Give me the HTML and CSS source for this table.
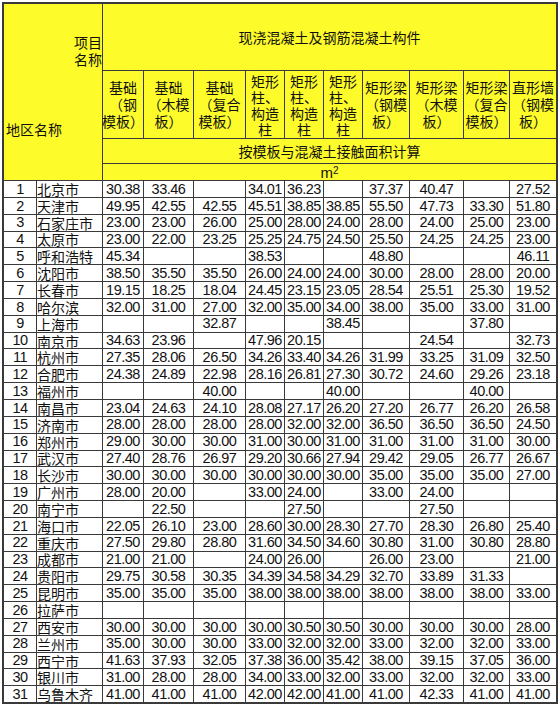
FILE: index.html
```html
<!DOCTYPE html>
<html lang="zh-CN">
<head>
<meta charset="utf-8">
<title>模板与混凝土接触面积</title>
<link rel="stylesheet" href="styles.css">
</head>
<body>
<div class="sheet">
  <div class="corner"><span class="item">项目<br>名称</span><span class="region">地区名称</span></div>
  <div class="title">现浇混凝土及钢筋混凝土构件</div>
  <div class="sub"><span>基础</span><span>（钢</span><span>模板）</span></div>
  <div class="sub"><span>基础</span><span>（木模</span><span>板）</span></div>
  <div class="sub"><span>基础</span><span>（复合</span><span>模板）</span></div>
  <div class="sub tall"><span>矩形</span><span>柱、</span><span>构造</span><span>柱</span></div>
  <div class="sub tall"><span>矩形</span><span>柱、</span><span>构造</span><span>柱</span></div>
  <div class="sub tall"><span>矩形</span><span>柱、</span><span>构造</span><span>柱</span></div>
  <div class="sub"><span>矩形梁</span><span>（钢模</span><span>板）</span></div>
  <div class="sub"><span>矩形梁</span><span>（木模</span><span>板）</span></div>
  <div class="sub"><span>矩形梁</span><span>（复合</span><span>模板）</span></div>
  <div class="sub"><span>直形墙</span><span>（钢模</span><span>板）</span></div>
  <div class="band">按模板与混凝土接触面积计算</div>
  <div class="band unit">m<sup>2</sup></div>

  <div class="n">1</div><div class="city">北京市</div><div class="v">30.38</div><div class="v">33.46</div><div class="v"></div><div class="v">34.01</div><div class="v">36.23</div><div class="v"></div><div class="v">37.37</div><div class="v">40.47</div><div class="v"></div><div class="v">27.52</div>
  <div class="n">2</div><div class="city">天津市</div><div class="v">49.95</div><div class="v">42.55</div><div class="v">42.55</div><div class="v">45.51</div><div class="v">38.85</div><div class="v">38.85</div><div class="v">55.50</div><div class="v">47.73</div><div class="v">33.30</div><div class="v">51.80</div>
  <div class="n">3</div><div class="city">石家庄市</div><div class="v">23.00</div><div class="v">23.00</div><div class="v">26.00</div><div class="v">25.00</div><div class="v">28.00</div><div class="v">24.00</div><div class="v">28.00</div><div class="v">24.00</div><div class="v">25.00</div><div class="v">23.00</div>
  <div class="n">4</div><div class="city">太原市</div><div class="v">23.00</div><div class="v">22.00</div><div class="v">23.25</div><div class="v">25.25</div><div class="v">24.75</div><div class="v">24.50</div><div class="v">25.50</div><div class="v">24.25</div><div class="v">24.25</div><div class="v">23.00</div>
  <div class="n">5</div><div class="city">呼和浩特</div><div class="v">45.34</div><div class="v"></div><div class="v"></div><div class="v">38.53</div><div class="v"></div><div class="v"></div><div class="v">48.80</div><div class="v"></div><div class="v"></div><div class="v">46.11</div>
  <div class="n">6</div><div class="city">沈阳市</div><div class="v">38.50</div><div class="v">35.50</div><div class="v">35.50</div><div class="v">26.00</div><div class="v">24.00</div><div class="v">24.00</div><div class="v">30.00</div><div class="v">28.00</div><div class="v">28.00</div><div class="v">20.00</div>
  <div class="n">7</div><div class="city">长春市</div><div class="v">19.15</div><div class="v">18.25</div><div class="v">18.04</div><div class="v">24.45</div><div class="v">23.15</div><div class="v">23.05</div><div class="v">28.54</div><div class="v">25.51</div><div class="v">25.30</div><div class="v">19.52</div>
  <div class="n">8</div><div class="city">哈尔滨</div><div class="v">32.00</div><div class="v">31.00</div><div class="v">27.00</div><div class="v">32.00</div><div class="v">35.00</div><div class="v">34.00</div><div class="v">38.00</div><div class="v">35.00</div><div class="v">33.00</div><div class="v">31.00</div>
  <div class="n">9</div><div class="city">上海市</div><div class="v"></div><div class="v"></div><div class="v">32.87</div><div class="v"></div><div class="v"></div><div class="v">38.45</div><div class="v"></div><div class="v"></div><div class="v">37.80</div><div class="v"></div>
  <div class="n">10</div><div class="city">南京市</div><div class="v">34.63</div><div class="v">23.96</div><div class="v"></div><div class="v">47.96</div><div class="v">20.15</div><div class="v"></div><div class="v"></div><div class="v">24.54</div><div class="v"></div><div class="v">32.73</div>
  <div class="n">11</div><div class="city">杭州市</div><div class="v">27.35</div><div class="v">28.06</div><div class="v">26.50</div><div class="v">34.26</div><div class="v">33.40</div><div class="v">34.26</div><div class="v">31.99</div><div class="v">33.25</div><div class="v">31.09</div><div class="v">32.50</div>
  <div class="n">12</div><div class="city">合肥市</div><div class="v">24.38</div><div class="v">24.89</div><div class="v">22.98</div><div class="v">28.16</div><div class="v">26.81</div><div class="v">27.30</div><div class="v">30.72</div><div class="v">24.60</div><div class="v">29.26</div><div class="v">23.18</div>
  <div class="n">13</div><div class="city">福州市</div><div class="v"></div><div class="v"></div><div class="v">40.00</div><div class="v"></div><div class="v"></div><div class="v">40.00</div><div class="v"></div><div class="v"></div><div class="v">40.00</div><div class="v"></div>
  <div class="n">14</div><div class="city">南昌市</div><div class="v">23.04</div><div class="v">24.63</div><div class="v">24.10</div><div class="v">28.08</div><div class="v">27.17</div><div class="v">26.20</div><div class="v">27.20</div><div class="v">26.77</div><div class="v">26.20</div><div class="v">26.58</div>
  <div class="n">15</div><div class="city">济南市</div><div class="v">28.00</div><div class="v">28.00</div><div class="v">28.00</div><div class="v">28.00</div><div class="v">32.00</div><div class="v">32.00</div><div class="v">36.50</div><div class="v">36.50</div><div class="v">36.50</div><div class="v">24.50</div>
  <div class="n">16</div><div class="city">郑州市</div><div class="v">29.00</div><div class="v">30.00</div><div class="v">30.00</div><div class="v">31.00</div><div class="v">30.00</div><div class="v">31.00</div><div class="v">31.00</div><div class="v">31.00</div><div class="v">31.00</div><div class="v">30.00</div>
  <div class="n">17</div><div class="city">武汉市</div><div class="v">27.40</div><div class="v">28.76</div><div class="v">26.97</div><div class="v">29.20</div><div class="v">30.66</div><div class="v">27.94</div><div class="v">29.42</div><div class="v">29.05</div><div class="v">26.77</div><div class="v">26.67</div>
  <div class="n">18</div><div class="city">长沙市</div><div class="v">30.00</div><div class="v">30.00</div><div class="v">30.00</div><div class="v">30.00</div><div class="v">30.00</div><div class="v">30.00</div><div class="v">35.00</div><div class="v">35.00</div><div class="v">35.00</div><div class="v">27.00</div>
  <div class="n">19</div><div class="city">广州市</div><div class="v">28.00</div><div class="v">20.00</div><div class="v"></div><div class="v">33.00</div><div class="v">24.00</div><div class="v"></div><div class="v">33.00</div><div class="v">24.00</div><div class="v"></div><div class="v"></div>
  <div class="n">20</div><div class="city">南宁市</div><div class="v"></div><div class="v">22.50</div><div class="v"></div><div class="v"></div><div class="v">27.50</div><div class="v"></div><div class="v"></div><div class="v">27.50</div><div class="v"></div><div class="v"></div>
  <div class="n">21</div><div class="city">海口市</div><div class="v">22.05</div><div class="v">26.10</div><div class="v">23.00</div><div class="v">28.60</div><div class="v">30.00</div><div class="v">28.30</div><div class="v">27.70</div><div class="v">28.30</div><div class="v">26.80</div><div class="v">25.40</div>
  <div class="n">22</div><div class="city">重庆市</div><div class="v">27.50</div><div class="v">29.80</div><div class="v">28.80</div><div class="v">31.60</div><div class="v">34.50</div><div class="v">34.60</div><div class="v">30.80</div><div class="v">31.00</div><div class="v">30.80</div><div class="v">28.80</div>
  <div class="n">23</div><div class="city">成都市</div><div class="v">21.00</div><div class="v">21.00</div><div class="v"></div><div class="v">24.00</div><div class="v">26.00</div><div class="v"></div><div class="v">26.00</div><div class="v">23.00</div><div class="v"></div><div class="v">21.00</div>
  <div class="n">24</div><div class="city">贵阳市</div><div class="v">29.75</div><div class="v">30.58</div><div class="v">30.35</div><div class="v">34.39</div><div class="v">34.58</div><div class="v">34.29</div><div class="v">32.70</div><div class="v">33.89</div><div class="v">31.33</div><div class="v"></div>
  <div class="n">25</div><div class="city">昆明市</div><div class="v">35.00</div><div class="v">35.00</div><div class="v">35.00</div><div class="v">38.00</div><div class="v">38.00</div><div class="v">38.00</div><div class="v">38.00</div><div class="v">38.00</div><div class="v">38.00</div><div class="v">33.00</div>
  <div class="n">26</div><div class="city">拉萨市</div><div class="v"></div><div class="v"></div><div class="v"></div><div class="v"></div><div class="v"></div><div class="v"></div><div class="v"></div><div class="v"></div><div class="v"></div><div class="v"></div>
  <div class="n">27</div><div class="city">西安市</div><div class="v">30.00</div><div class="v">30.00</div><div class="v">30.00</div><div class="v">30.00</div><div class="v">30.50</div><div class="v">30.50</div><div class="v">30.00</div><div class="v">30.00</div><div class="v">30.00</div><div class="v">28.00</div>
  <div class="n">28</div><div class="city">兰州市</div><div class="v">35.00</div><div class="v">30.00</div><div class="v">30.00</div><div class="v">33.00</div><div class="v">32.00</div><div class="v">32.00</div><div class="v">33.00</div><div class="v">32.00</div><div class="v">32.00</div><div class="v">33.00</div>
  <div class="n">29</div><div class="city">西宁市</div><div class="v">41.63</div><div class="v">37.93</div><div class="v">32.05</div><div class="v">37.38</div><div class="v">36.00</div><div class="v">35.42</div><div class="v">38.00</div><div class="v">39.15</div><div class="v">37.05</div><div class="v">36.00</div>
  <div class="n">30</div><div class="city">银川市</div><div class="v">31.00</div><div class="v">28.00</div><div class="v">28.00</div><div class="v">34.00</div><div class="v">33.00</div><div class="v">32.00</div><div class="v">33.00</div><div class="v">32.00</div><div class="v">32.00</div><div class="v">33.00</div>
  <div class="n">31</div><div class="city">乌鲁木齐</div><div class="v">41.00</div><div class="v">41.00</div><div class="v">41.00</div><div class="v">42.00</div><div class="v">42.00</div><div class="v">41.00</div><div class="v">41.00</div><div class="v">42.33</div><div class="v">41.00</div><div class="v">41.00</div>
</div>
</body>
</html>
```

FILE: styles.css
```css
html, body {
  margin: 0;
  background: #ffffff;
}

.sheet {
  display: grid;
  width: max-content;
  margin: 2px 0 0 2px;
  padding: 2px;
  gap: 1px;
  background: #3a3a3a;
  grid-template-columns: 32px 65px 40px 49px 51px 38px 38px 38px 46px 53px 45px 46px;
  grid-template-rows: 66px 67px 24px 16px;
  grid-auto-rows: 15.85px;
  font-family: "Noto Sans CJK SC", sans-serif;
  font-size: 14px;
  color: #111111;
}

/* header */
.corner,
.title,
.sub,
.band {
  background: #fdfb2a;
}

.corner {
  grid-column: 1 / 3;
  grid-row: 1 / 5;
  display: flex;
  flex-direction: column;
}

.corner .item {
  align-self: flex-end;
  text-align: right;
  line-height: 17px;
  margin-top: 30px;
}

.corner .region {
  margin-top: auto;
  margin-bottom: 42px;
  padding-left: 2px;
  line-height: 17px;
}

.title {
  grid-column: span 10;
  display: flex;
  align-items: center;
  justify-content: center;
  line-height: 1;
}

.sub {
  display: flex;
  flex-direction: column;
  align-items: center;
  justify-content: center;
  line-height: 17px;
  white-space: nowrap;
}

.sub.tall {
  line-height: 16px;
}

.band {
  grid-column: span 10;
  display: flex;
  align-items: center;
  justify-content: center;
  line-height: 1;
}

.band.unit {
  font-family: "Liberation Sans", "Noto Sans CJK SC", sans-serif;
  font-size: 15px;
}

.band.unit sup {
  font-size: 10px;
  line-height: 0;
  position: relative;
  top: -1px;
}

/* body */
.n,
.city,
.v {
  background: #ffffff;
  display: flex;
  align-items: center;
  white-space: nowrap;
  line-height: 1;
}

.n,
.v {
  justify-content: center;
  font-family: "Liberation Sans", sans-serif;
  font-size: 14.5px;
  letter-spacing: -0.5px;
}

.city {
  justify-content: flex-start;
  font-size: 14px;
}
```
